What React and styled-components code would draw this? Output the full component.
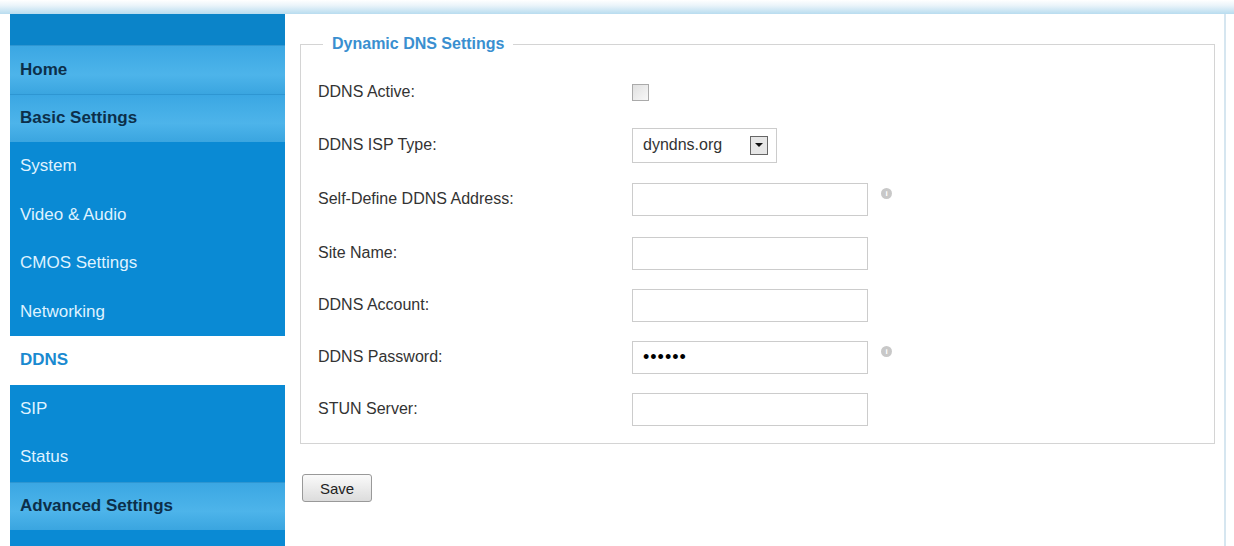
import React from 'react';
import styled, { createGlobalStyle } from 'styled-components';

const Global = createGlobalStyle`
  body { margin: 0; background: #fff; font-family: "Liberation Sans", Arial, sans-serif; }
`;

const Page = styled.div`
  width: 1234px;
  height: 546px;
  overflow: hidden;
  display: flex;
  flex-direction: column;
`;

const TopStrip = styled.div`
  height: 14px;
  background: linear-gradient(180deg, #fff 0%, #eaf4fa 40%, #b8dcef 100%);
`;

const Body = styled.div`
  display: flex;
  flex: 1;
  padding-left: 10px;
  border-right: 2px solid #d6e6f0;
  margin-right: 8px;
`;

const Sidebar = styled.div`
  width: 275px;
  background: #0a8ad4;
  display: flex;
  flex-direction: column;
`;

const SideTop = styled.div`
  height: 31px;
  background: #0b84c9;
`;

const NavItem = styled.div`
  height: 48.5px;
  display: flex;
  align-items: center;
  padding-left: 10px;
  font-size: 17px;
  box-sizing: border-box;
  ${p => p.$kind === 'header' && `
    background: linear-gradient(180deg, #3ba7e3 0%, #4db4ea 60%, #3aa5e0 100%);
    color: #0c2f4a;
    font-weight: bold;
    border-top: 1px solid #2e96d2;
  `}
  ${p => p.$kind === 'item' && `
    color: #dff2ff;
  `}
  ${p => p.$kind === 'active' && `
    background: #fff;
    color: #1a8ad0;
    font-weight: bold;
  `}
`;

const Main = styled.div`
  flex: 1;
  padding: 21px 0 0 15px;
`;

const Fieldset = styled.fieldset`
  margin: 0;
  width: 915px;
  box-sizing: border-box;
  border: 1px solid #d4d4d4;
  padding: 12px 0 18px 17px;
  height: 409px;
`;

const Legend = styled.legend`
  color: #3a8fd0;
  font-weight: bold;
  font-size: 16px;
  padding: 0 9px;
  margin-left: 5px;
`;

const Row = styled.div`
  display: flex;
  align-items: center;
  height: ${p => p.$h || 52}px;
`;

const Label = styled.div`
  width: 314px;
  font-size: 16px;
  color: #333;
`;

const TextBox = styled.div`
  width: 236px;
  height: 33px;
  box-sizing: border-box;
  border: 1px solid #ccc;
  background: #fff;
  display: flex;
  align-items: center;
  padding-left: 10px;
  font-size: 18px;
  letter-spacing: 1px;
`;

const Check = styled.div`
  width: 17px;
  height: 17px;
  border: 1px solid #aaa;
  background: linear-gradient(135deg, #e0e0e0, #f8f8f8);
  box-sizing: border-box;
`;

const Select = styled.div`
  width: 145px;
  height: 35px;
  box-sizing: border-box;
  border: 1px solid #ccc;
  display: flex;
  align-items: center;
  justify-content: space-between;
  padding: 0 8px 0 10px;
  font-size: 16px;
  color: #333;
`;

const Arrow = styled.div`
  width: 18px;
  height: 19px;
  border: 1px solid #666;
  background: #e6e6e6;
  box-sizing: border-box;
  display: flex;
  align-items: center;
  justify-content: center;
  &::after {
    content: '';
    border-left: 4px solid transparent;
    border-right: 4px solid transparent;
    border-top: 4px solid #111;
  }
`;

const Info = styled.div`
  width: 11px;
  height: 11px;
  border-radius: 50%;
  background: #c8c8c8;
  margin-left: 13px;
  margin-top: -12px;
  color: #fff;
  font-size: 8px;
  font-weight: bold;
  display: flex;
  align-items: center;
  justify-content: center;
`;

const SaveButton = styled.button`
  margin-top: 30px;
  margin-left: 2px;
  width: 70px;
  height: 28px;
  border: 1px solid #999;
  border-radius: 3px;
  background: linear-gradient(180deg, #fafafa, #dcdcdc);
  font-family: inherit;
  font-size: 15px;
  color: #222;
`;

const nav = [
  ['Home', 'header'], ['Basic Settings', 'header'], ['System', 'item'],
  ['Video & Audio', 'item'], ['CMOS Settings', 'item'], ['Networking', 'item'],
  ['DDNS', 'active'], ['SIP', 'item'], ['Status', 'item'], ['Advanced Settings', 'header'],
];

export default function App() {
  return (
    <Page>
      <Global />
      <TopStrip />
      <Body>
        <Sidebar>
          <SideTop />
          {nav.map(([t, k]) => <NavItem key={t} $kind={k}>{t}</NavItem>)}
        </Sidebar>
        <Main>
          <Fieldset>
            <Legend>Dynamic DNS Settings</Legend>
            <Row $h={54}><Label>DDNS Active:</Label><Check /></Row>
            <Row $h={52}><Label>DDNS ISP Type:</Label><Select>dyndns.org<Arrow /></Select></Row>
            <Row $h={56}><Label>Self-Define DDNS Address:</Label><TextBox /><Info>i</Info></Row>
            <Row><Label>Site Name:</Label><TextBox /></Row>
            <Row><Label>DDNS Account:</Label><TextBox /></Row>
            <Row><Label>DDNS Password:</Label><TextBox>••••••</TextBox><Info>i</Info></Row>
            <Row><Label>STUN Server:</Label><TextBox /></Row>
          </Fieldset>
          <SaveButton>Save</SaveButton>
        </Main>
      </Body>
    </Page>
  );
}
